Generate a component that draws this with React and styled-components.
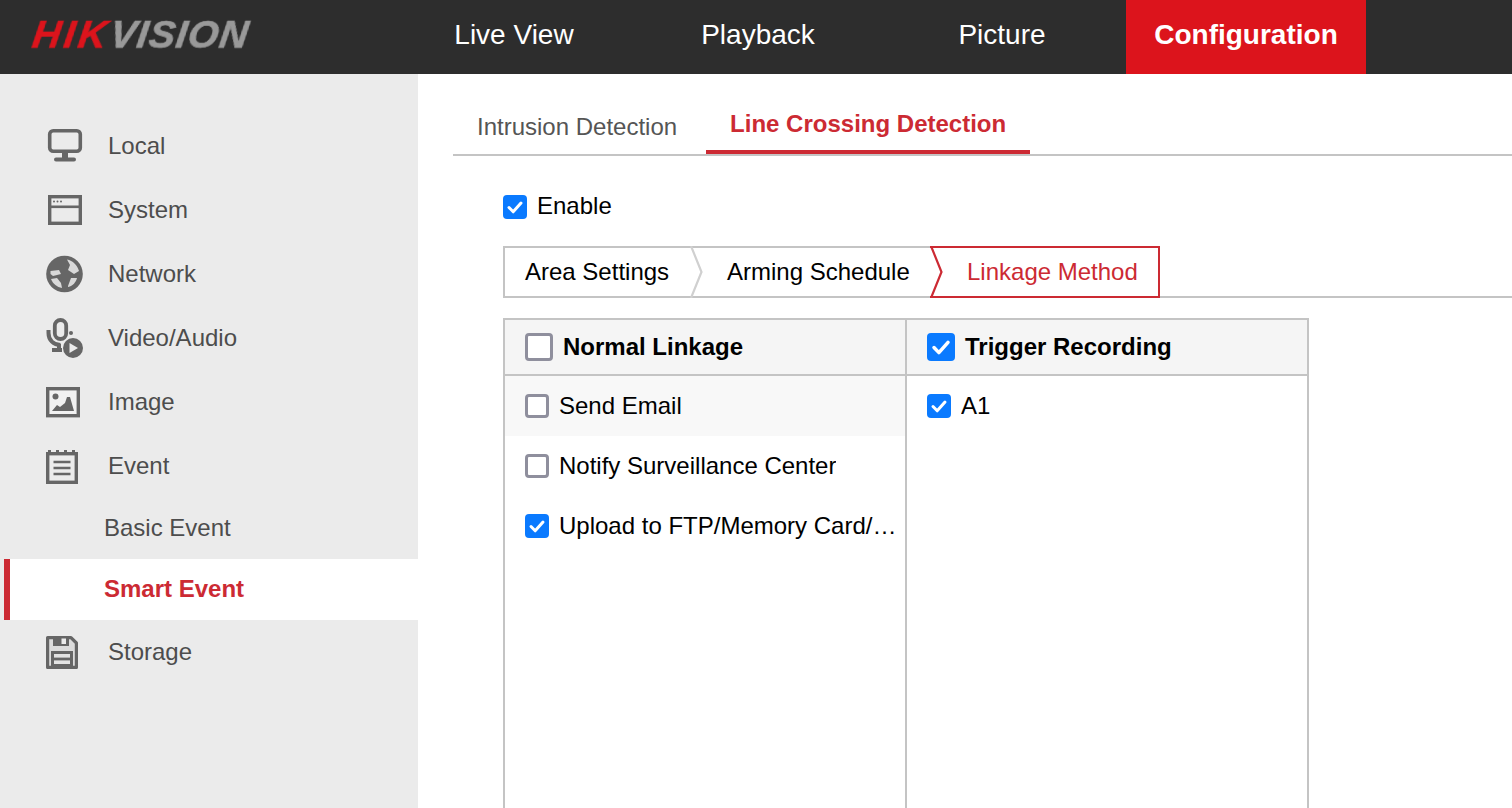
import React from "react";
import styled, { createGlobalStyle } from "styled-components";

const Global = createGlobalStyle`
  html, body { margin: 0; padding: 0; height: 100%; overflow: hidden; background: #fff; }
  body { font-family: "Liberation Sans", Arial, sans-serif; }
  * { box-sizing: border-box; }
`;

const Page = styled.div`
  width: 1512px;
  height: 808px;
  display: flex;
  flex-direction: column;
  overflow: hidden;
`;

const Header = styled.header`
  height: 74px;
  flex: none;
  background: #2d2d2d;
  display: flex;
`;

const LogoSlot = styled.div`
  width: 394px;
  padding-left: 30px;
  padding-top: 14px;
`;

const Logo = styled.div`
  font-size: 39px;
  line-height: 41px;
  font-weight: 700;
  font-style: italic;
  letter-spacing: 1.1px;
  white-space: nowrap;
  color: #999;
  -webkit-text-stroke: 0.7px currentColor;
  transform: skewX(-8deg);
  transform-origin: 0 100%;
  filter: blur(0.5px);
`;

const LogoRed = styled.span`
  color: #dc141c;
  letter-spacing: 3.4px;
`;

const Nav = styled.nav`
  display: flex;
  gap: 4px;
`;

const NavItem = styled.div`
  width: 240px;
  height: 74px;
  display: flex;
  align-items: center;
  justify-content: center;
  padding-bottom: 5px;
  font-size: 28px;
  color: #fff;
  font-weight: ${(p) => (p.$active ? 700 : 400)};
  background: ${(p) => (p.$active ? "#dc141c" : "transparent")};
`;

const Body = styled.div`
  flex: 1;
  display: flex;
  min-height: 0;
`;

const Sidebar = styled.aside`
  width: 418px;
  flex: none;
  background: #ebebeb;
  padding-top: 40px;
`;

const MenuRow = styled.div`
  height: 64px;
  display: flex;
  align-items: center;
  gap: 26px;
  padding-left: 46px;
  font-size: 24px;
  color: #4d4d4d;
`;

const MenuIcon = styled.svg`
  width: 36px;
  height: 38px;
  flex: none;
  color: #666;
  overflow: visible;
  filter: blur(0.45px);
`;

const SubRow = styled.div`
  height: 61px;
  display: flex;
  align-items: center;
  padding-bottom: 2px;
  padding-left: ${(p) => (p.$active ? "94px" : "104px")};
  margin-left: ${(p) => (p.$active ? "4px" : "0")};
  font-size: 24px;
  font-weight: ${(p) => (p.$active ? 700 : 400)};
  color: ${(p) => (p.$active ? "#cc2a33" : "#4d4d4d")};
  background: ${(p) => (p.$active ? "#fff" : "transparent")};
  border-left: ${(p) => (p.$active ? "6px solid #cc2a33" : "0")};
`;

const Main = styled.main`
  flex: 1;
  min-width: 0;
  padding-left: 35px;
  display: flex;
  flex-direction: column;
`;

const TabBar = styled.div`
  height: 82px;
  flex: none;
  display: flex;
  align-items: flex-end;
  border-bottom: 2px solid #c4c4c4;
`;

const Tab = styled.div`
  height: 80px;
  display: flex;
  align-items: center;
  font-size: 24px;
  padding: ${(p) => (p.$active ? "24px 24px 0" : "26px 29px 0 24px")};
  font-weight: ${(p) => (p.$active ? 700 : 400)};
  color: ${(p) => (p.$active ? "#cc2a33" : "#555")};
  border-bottom: ${(p) => (p.$active ? "4px solid #cc2a33" : "0")};
`;

const Content = styled.div`
  flex: 1;
  min-height: 0;
  padding: 39px 0 0 50px;
  display: flex;
  flex-direction: column;
`;

const CheckRow = styled.label`
  display: flex;
  align-items: flex-start;
  gap: 10px;
  font-size: 24px;
  color: #000;
`;

const CheckLabel = styled.span`
  line-height: 22px;
`;

const Box = styled.span`
  flex: none;
  width: ${(p) => p.$size}px;
  height: ${(p) => p.$size}px;
  border-radius: 4px;
  display: inline-flex;
  align-items: center;
  justify-content: center;
  background: ${(p) => (p.$checked ? "#0a7aff" : "#fff")};
  border: ${(p) => (p.$checked ? "0" : "3px solid #8f8f9d")};
`;

const Steps = styled.div`
  margin-top: 27px;
  height: 52px;
  flex: none;
  display: flex;
  border-bottom: 2px solid #c4c4c4;
`;

const Step = styled.div`
  position: relative;
  height: 52px;
  display: flex;
  align-items: center;
  flex: none;
  width: ${(p) => p.$w}px;
  padding-left: ${(p) => p.$pad}px;
  font-size: 24px;
  color: ${(p) => (p.$active ? "#cc2a33" : "#000")};
  border-top: 2px solid ${(p) => (p.$active ? "#cc2a33" : "#c4c4c4")};
  border-bottom: 2px solid ${(p) => (p.$active ? "#cc2a33" : "#c4c4c4")};
  border-right: ${(p) => (p.$active ? "2px solid #cc2a33" : "0")};
  border-left: ${(p) => (p.$first ? "2px solid #c4c4c4" : "0")};
`;

const Chevron = styled.svg`
  position: absolute;
  left: 0;
  top: -2px;
  width: 14px;
  height: 52px;
`;

const Table = styled.div`
  margin-top: 20px;
  width: 806px;
  height: 560px;
  flex: none;
  display: grid;
  grid-template-columns: 400px 1fr;
  border: 2px solid #c4c4c4;
`;

const Column = styled.div`
  display: flex;
  flex-direction: column;
  min-width: 0;
  & + & { border-left: 2px solid #c4c4c4; }
`;

const ColHead = styled.div`
  height: 56px;
  flex: none;
  display: flex;
  align-items: center;
  gap: 10px;
  padding-left: 20px;
  font-size: 24px;
  font-weight: 700;
  color: #000;
  background: #f5f5f5;
  border-bottom: 2px solid #c4c4c4;
`;

const Row = styled.div`
  height: 60px;
  flex: none;
  display: flex;
  align-items: center;
  gap: 10px;
  padding: 0 8px 0 20px;
  font-size: 24px;
  color: #000;
  background: ${(p) => (p.$hover ? "#f8f8f8" : "transparent")};
`;

const RowText = styled.span`
  min-width: 0;
  white-space: nowrap;
  overflow: hidden;
  text-overflow: ellipsis;
`;

const Check = ({ size = 24, checked }) => (
  <Box $size={size} $checked={checked}>
    {checked && (
      <svg width={size} height={size} viewBox="0 0 24 24" fill="none">
        <path d="M6 12.5l4.2 4.3L18 8" stroke="#fff" strokeWidth="3" strokeLinecap="round" strokeLinejoin="round" />
      </svg>
    )}
  </Box>
);

const icons = {
  monitor: (
    <>
      <rect x="3.7" y="3.7" width="30.6" height="20.6" rx="3.5" fill="none" stroke="currentColor" strokeWidth="3.6" />
      <rect x="16" y="25" width="6" height="7" fill="currentColor" />
      <rect x="8" y="30.5" width="22" height="4" rx="2" fill="currentColor" />
    </>
  ),
  system: (
    <>
      <rect x="3.7" y="5.7" width="30.6" height="26.6" fill="none" stroke="currentColor" strokeWidth="3.4" />
      <rect x="3" y="14.5" width="32" height="2.6" fill="currentColor" />
      <circle cx="8" cy="10.5" r="1" fill="currentColor" />
      <circle cx="11.5" cy="10.5" r="1" fill="currentColor" />
      <circle cx="15" cy="10.5" r="1" fill="currentColor" />
    </>
  ),
  globe: (
    <>
      <circle cx="18.5" cy="19" r="18.3" fill="currentColor" />
      <path d="M4.5 16L13 15L15 19L7 21L4.5 19z" fill="#d9d9d9" />
      <path d="M21 4.5C27 5.5 31 10 33 16L28 19L22 15L24 10z" fill="#d9d9d9" />
      <path d="M5 24L11 23L15 28L16 33C11 32 7 29 5 24z" fill="#d9d9d9" />
      <path d="M22 31L25 23L31 23C30 27 27 31 22 32z" fill="#d9d9d9" />
    </>
  ),
  mic: (
    <>
      <rect x="8.8" y="1" width="11.4" height="19" rx="5.7" fill="none" stroke="currentColor" strokeWidth="3.8" />
      <path d="M2.5 11v3c0 7 5 12 12 12" fill="none" stroke="currentColor" strokeWidth="4" />
      <rect x="6" y="29" width="10" height="4" fill="currentColor" />
      <rect x="11" y="25" width="4" height="6" fill="currentColor" />
      <circle cx="25" cy="14" r="2" fill="currentColor" />
      <circle cx="27" cy="29" r="10" fill="currentColor" />
      <path d="M23.5 24l8.5 5-8.5 5z" fill="#ebebeb" />
    </>
  ),
  image: (
    <>
      <rect x="1.7" y="5.7" width="30.6" height="27" fill="#f1f1f1" stroke="currentColor" strokeWidth="3.4" />
      <circle cx="9.5" cy="13.5" r="3" fill="currentColor" />
      <path d="M6 28l5-6 3 2 5-4 2-6 3 0 4 14z" fill="currentColor" />
    </>
  ),
  event: (
    <>
      <rect x="1.7" y="6.7" width="28.6" height="28.6" fill="#ececec" stroke="currentColor" strokeWidth="3.4" />
      <path d="M3.5 3v5M11.5 3v5M19.5 3v5M27.5 3v5" stroke="currentColor" strokeWidth="3" />
      <rect x="0" y="5" width="32" height="3" fill="currentColor" />
      <path d="M7.5 15h17M7.5 21h17M7.5 27h17" stroke="currentColor" strokeWidth="2.4" />
    </>
  ),
  save: (
    <>
      <path d="M1.6 4.6h23.4l5.4 5.4v24.4H1.6z" fill="#dcdcdc" stroke="currentColor" strokeWidth="3.2" strokeLinejoin="round" />
      <path d="M7 4h16v9H7z" fill="currentColor" />
      <rect x="15.5" y="5.5" width="4.5" height="5.5" fill="#ebebeb" />
      <path d="M5 18h22v16H5z" fill="currentColor" />
      <rect x="8" y="21" width="16" height="3.6" fill="#e3e3e3" />
      <rect x="8" y="27.4" width="16" height="3.6" fill="#e3e3e3" />
    </>
  ),
};

const menuTop = [
  ["Local", "monitor"],
  ["System", "system"],
  ["Network", "globe"],
  ["Video/Audio", "mic"],
  ["Image", "image"],
  ["Event", "event"],
];

const MenuItem = ({ label, icon }) => (
  <MenuRow>
    <MenuIcon viewBox="0 0 36 38">{icons[icon]}</MenuIcon>
    {label}
  </MenuRow>
);

const StepChevron = ({ color }) => (
  <Chevron viewBox="0 0 14 52">
    <path d="M1 0l10.5 26L1 52" fill="none" stroke={color} strokeWidth="2.2" />
  </Chevron>
);

export default function App() {
  return (
    <Page>
      <Global />
      <Header>
        <LogoSlot>
          <Logo>
            <LogoRed>HIK</LogoRed>VISION
          </Logo>
        </LogoSlot>
        <Nav>
          <NavItem>Live View</NavItem>
          <NavItem>Playback</NavItem>
          <NavItem>Picture</NavItem>
          <NavItem $active>Configuration</NavItem>
        </Nav>
      </Header>
      <Body>
        <Sidebar>
          {menuTop.map(([label, icon]) => (
            <MenuItem key={label} label={label} icon={icon} />
          ))}
          <SubRow>Basic Event</SubRow>
          <SubRow $active>Smart Event</SubRow>
          <MenuItem label="Storage" icon="save" />
        </Sidebar>
        <Main>
          <TabBar>
            <Tab>Intrusion Detection</Tab>
            <Tab $active>Line Crossing Detection</Tab>
          </TabBar>
          <Content>
            <CheckRow>
              <Check checked />
              <CheckLabel>Enable</CheckLabel>
            </CheckRow>
            <Steps>
              <Step $first $w={187} $pad={20}>Area Settings</Step>
              <Step $w={240} $pad={37}>
                <StepChevron color="#d0d0d0" />
                Arming Schedule
              </Step>
              <Step $active $w={230} $pad={37}>
                <StepChevron color="#cc2a33" />
                Linkage Method
              </Step>
            </Steps>
            <Table>
              <Column>
                <ColHead>
                  <Check size={28} />
                  Normal Linkage
                </ColHead>
                <Row $hover>
                  <Check />
                  <RowText>Send Email</RowText>
                </Row>
                <Row>
                  <Check />
                  <RowText>Notify Surveillance Center</RowText>
                </Row>
                <Row>
                  <Check checked />
                  <RowText>Upload to FTP/Memory Card/NAS</RowText>
                </Row>
              </Column>
              <Column>
                <ColHead>
                  <Check size={28} checked />
                  Trigger Recording
                </ColHead>
                <Row>
                  <Check checked />
                  <RowText>A1</RowText>
                </Row>
              </Column>
            </Table>
          </Content>
        </Main>
      </Body>
    </Page>
  );
}
